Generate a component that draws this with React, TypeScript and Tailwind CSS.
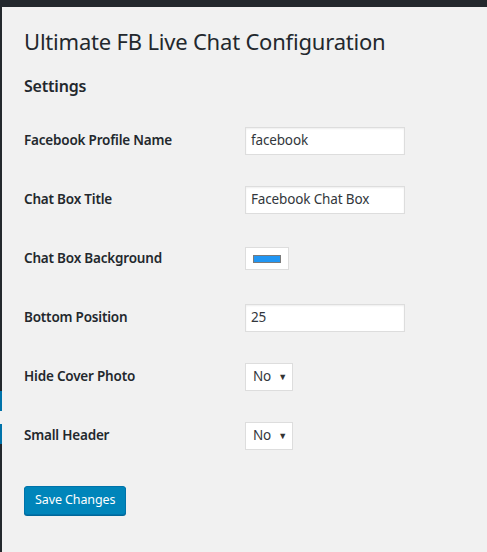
import React from 'react';

const rows = [
  { label: 'Facebook Profile Name', kind: 'text', value: 'facebook' },
  { label: 'Chat Box Title', kind: 'text', value: 'Facebook Chat Box' },
  { label: 'Chat Box Background', kind: 'color', value: '#2196f3' },
  { label: 'Bottom Position', kind: 'text', value: '25' },
  { label: 'Hide Cover Photo', kind: 'select', value: 'No' },
  { label: 'Small Header', kind: 'select', value: 'No' },
];

function Field({ kind, value }: { kind: string; value: string }) {
  if (kind === 'color') {
    return (
      <div className="w-[44px] h-[23px] bg-white border border-[#dddddd] flex items-center justify-center">
        <div className="w-[28px] h-[8px] bg-[#2196f3] border border-[#7a7a7a]" />
      </div>
    );
  }
  if (kind === 'select') {
    return (
      <div className="w-[48px] h-[28px] bg-white border border-[#dddddd] flex items-center pl-[7px] pr-[5px] justify-between text-[13.5px] tracking-[-0.15px] text-[#32373c]">
        <span>{value}</span>
        <span className="text-[9px] text-[#333]">▼</span>
      </div>
    );
  }
  return (
    <div className="w-[160px] h-[28px] bg-white border border-[#dddddd] shadow-[inset_0_1px_2px_rgba(0,0,0,0.07)] flex items-center px-[5px] text-[13.5px] tracking-[-0.15px] text-[#32373c]">
      {value}
    </div>
  );
}

export default function App() {
  return (
    <div className="w-full h-[552px] bg-[#f1f1f1] flex flex-col overflow-hidden font-['Noto_Sans',sans-serif] text-[#23282d]">
      <div className="h-[7px] bg-[#23282d] shrink-0" />
      <div className="flex flex-1">
        {/* admin menu edge */}
        <div className="w-[2px] flex flex-col shrink-0">
          <div className="h-[384px] bg-[#23282d]" />
          <div className="h-[20px] bg-[#0073aa]" />
          <div className="h-[13px]" />
          <div className="h-[20px] bg-[#0073aa]" />
          <div className="flex-1 bg-[#23282d]" />
        </div>

        <div className="flex-1 pl-[22px]">
          <h1 className="text-[22px] tracking-[-0.2px] leading-[29px] pt-[20px] font-normal">Ultimate FB Live Chat Configuration</h1>
          <h2 className="text-[16px] tracking-[-0.2px] leading-[22px] mt-[19px] font-semibold">Settings</h2>

          <div className="mt-[14px] flex flex-col">
            {rows.map((r) => (
              <div key={r.label} className="h-[59px] flex items-center">
                <div className="w-[221px] text-[13.5px] tracking-[-0.2px] font-semibold">{r.label}</div>
                <Field kind={r.kind} value={r.value} />
              </div>
            ))}
          </div>

          <button className="mt-[21px] h-[29px] px-[10px] rounded-[3px] bg-[#0085ba] border border-[#0073aa] shadow-[0_1px_0_#006799] text-white text-[12.5px] tracking-[-0.1px]">
            Save Changes
          </button>
        </div>
      </div>
    </div>
  );
}
